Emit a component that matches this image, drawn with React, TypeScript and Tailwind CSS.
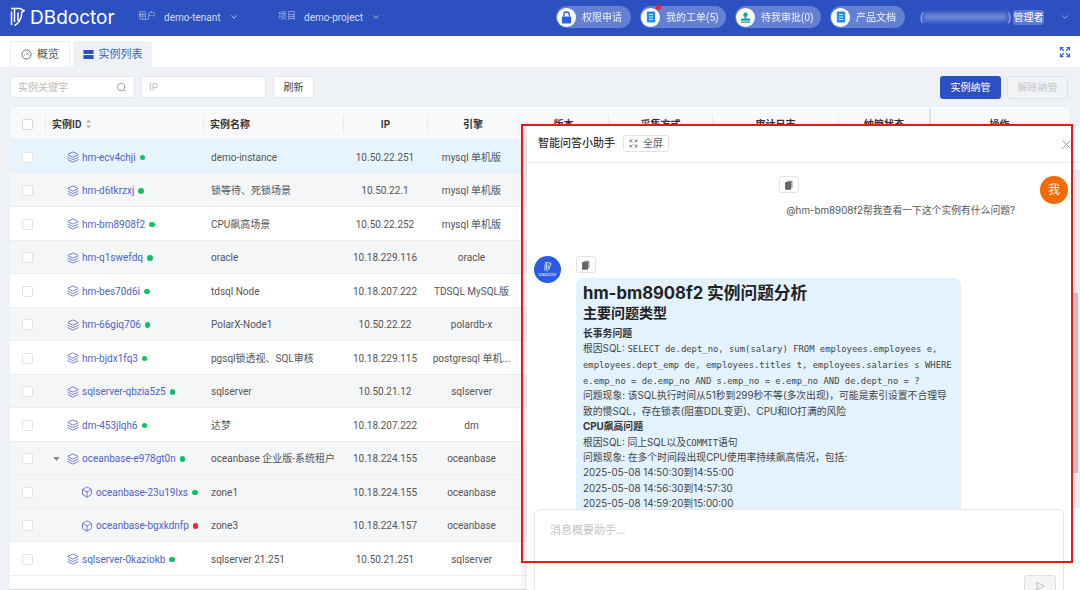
import React from "react";
import { ChevronDown, Search, Layers, Box, Expand, X } from "lucide-react";

type Row = {
  id: string;
  name: string;
  ip: string;
  engine: string;
  bg: string;
  level?: "parent" | "child";
  down?: boolean;
};

const WHITE = "bg-white";
const GRAY = "bg-[#f5f6f8]";

const rows: Row[] = [
  { id: "hm-ecv4chji", name: "demo-instance", ip: "10.50.22.251", engine: "mysql 单机版", bg: "bg-[#e8f4fd]" },
  { id: "hm-d6tkrzxj", name: "锁等待、死锁场景", ip: "10.50.22.1", engine: "mysql 单机版", bg: GRAY },
  { id: "hm-bm8908f2", name: "CPU飙高场景", ip: "10.50.22.252", engine: "mysql 单机版", bg: WHITE },
  { id: "hm-q1swefdq", name: "oracle", ip: "10.18.229.116", engine: "oracle", bg: GRAY },
  { id: "hm-bes70d6i", name: "tdsql Node", ip: "10.18.207.222", engine: "TDSQL MySQL版", bg: WHITE },
  { id: "hm-66giq706", name: "PolarX-Node1", ip: "10.50.22.22", engine: "polardb-x", bg: GRAY },
  { id: "hm-bjdx1fq3", name: "pgsql锁透视、SQL审核", ip: "10.18.229.115", engine: "postgresql 单机...", bg: WHITE },
  { id: "sqlserver-qbzia5z5", name: "sqlserver", ip: "10.50.21.12", engine: "sqlserver", bg: GRAY },
  { id: "dm-453jlqh6", name: "达梦", ip: "10.18.207.222", engine: "dm", bg: WHITE },
  { id: "oceanbase-e978gt0n", name: "oceanbase 企业版-系统租户", ip: "10.18.224.155", engine: "oceanbase", bg: GRAY, level: "parent" },
  { id: "oceanbase-23u19lxs", name: "zone1", ip: "10.18.224.155", engine: "oceanbase", bg: GRAY, level: "child" },
  { id: "oceanbase-bgxkdnfp", name: "zone3", ip: "10.18.224.157", engine: "oceanbase", bg: GRAY, level: "child", down: true },
  { id: "sqlserver-0kaziokb", name: "sqlserver 21.251", ip: "10.50.21.251", engine: "sqlserver", bg: WHITE },
];

function Logo({ className }: { className: string }) {
  return (
    <svg viewBox="0 0 15 20" fill="none" stroke="currentColor" strokeWidth="1.5" className={className}>
      <path d="M1 1.5h9l4.2 2.2-2.6 1.6c.4 5.500-2.600 10.500-7.100 13.200" />
      <path d="M4.500 1.500v13.500M8 5.500v8.500M1.500 4.500v13.500" />
    </svg>
  );
}

function CopyIcon() {
  return (
    <svg viewBox="0 0 12 12" className="w-[10px] h-[10px]" fill="none" stroke="#555" strokeWidth="1">
      <path d="M4 1.500h5.500v8" />
      <rect x="2" y="3" width="6" height="8" fill="#666" stroke="#555" />
    </svg>
  );
}

function CopyButton() {
  return (
    <div className="w-5 h-[17px] bg-white border border-[#e2e2e2] rounded-[3px] flex items-center justify-center">
      <CopyIcon />
    </div>
  );
}

function Pill({ label, icon, width, dot }: { label: string; icon: React.ReactNode; width: string; dot?: boolean }) {
  return (
    <div className={`relative h-[22px] rounded-full bg-[#6480d4] flex items-center gap-[6px] pl-[1px] text-[10px] text-white ${width}`}>
      <div className="w-[19px] h-[19px] rounded-full bg-white flex items-center justify-center">{icon}</div>
      <span className="opacity-90">{label}</span>
      {dot && <span className="absolute left-[16px] -top-[1px] w-[5px] h-[5px] rounded-full bg-[#f5222d]" />}
    </div>
  );
}

function DocIcon() {
  return (
    <svg viewBox="0 0 12 14" className="w-[10px] h-[12px]">
      <rect x="1" y="0.5" width="10" height="13" rx="1.500" fill="#1f8cf5" />
      <path d="M3.500 4h5M3.500 7h5M3.500 10h5" stroke="#fff" strokeWidth="1" />
    </svg>
  );
}

function TopBar() {
  return (
    <header className="h-[36px] pb-[2px] bg-[#2d50c0] flex items-center text-white font-['Roboto','Noto_Sans_CJK_SC',sans-serif]">
      <div className="flex items-center ml-[10px] w-[128px]">
        <Logo className="w-[15px] h-[20px] text-white" />
        <span className="ml-[5px] text-[19px] leading-none font-['Inter',sans-serif] font-normal">DBdoctor</span>
      </div>
      <div className="flex items-center w-[140px] text-[10px] text-[#d5dcf3]">
        <span className="opacity-70 text-[9px]">租户</span>
        <span className="ml-[8px]">demo-tenant</span>
        <ChevronDown className="w-[10px] h-[10px] ml-[8px]" />
      </div>
      <div className="flex items-center text-[10px] text-[#d5dcf3] w-[278px]">
        <span className="opacity-70 text-[9px]">项目</span>
        <span className="ml-[8px]">demo-project</span>
        <ChevronDown className="w-[10px] h-[10px] ml-[8px]" />
      </div>
      <div className="flex items-center gap-[9px]">
        <Pill
          width="w-[75px]"
          label="权限申请"
          icon={
            <svg viewBox="0 0 12 14" className="w-[11px] h-[13px]">
              <path d="M3 6V4a3 3 0 0 1 6 0v2" fill="none" stroke="#2a5cf0" strokeWidth="1.400" />
              <rect x="1" y="6" width="10" height="7.500" rx="1" fill="#2a5cf0" />
            </svg>
          }
        />
        <Pill width="w-[86px]" label="我的工单(5)" icon={<DocIcon />} dot />
        <Pill
          width="w-[86px]"
          label="待我审批(0)"
          icon={
            <svg viewBox="0 0 12 12" className="w-[11px] h-[11px]" fill="#13a89e">
              <circle cx="6" cy="3" r="2.400" />
              <path d="M5 5h2v2h4v2.500H1V7h4z" />
              <rect x="1" y="10.400" width="10" height="1.400" />
            </svg>
          }
        />
        <Pill width="w-[75px]" label="产品文档" icon={<DocIcon />} />
      </div>
      <div className="ml-[15px] flex items-center">
        <span className="text-[10px] text-[#c8d2f0]">(</span>
        <div className="w-[84px] h-[8px] bg-[#6d88d8] blur-[2px]" />
        <span className="text-[10px] text-[#c8d2f0]">)</span>
      </div>
      <span className="ml-[2px] h-[15px] w-[31px] rounded-[3px] bg-[#5c7bd0] text-[10px] leading-[15px] text-center">管理者</span>
      <ChevronDown className="w-[10px] h-[10px] ml-[16px] text-[#a9b8e6]" />
    </header>
  );
}

function Tabs() {
  return (
    <div className="h-[31px] bg-white flex items-end pl-[10px] gap-[3px] relative">
      <div className="h-[26px] w-[60px] border border-b-0 border-[#eaecf0] rounded-t-[3px] flex items-center justify-center gap-[5px] text-[11px] text-[#555]">
        <svg viewBox="0 0 12 12" className="w-[11px] h-[11px]" fill="none" stroke="#666" strokeWidth="1">
          <circle cx="6" cy="6" r="5" />
          <path d="M6 6l2-2M3 6.500h1M8 6.500h1" />
        </svg>
        概览
      </div>
      <div className="h-[26px] w-[79px] bg-[#eef1f5] rounded-t-[3px] flex items-center justify-center gap-[5px] text-[11px] text-[#3f5fc6]">
        <svg viewBox="0 0 12 12" className="w-[11px] h-[11px]" fill="#2d50c0">
          <rect x="0.500" y="1" width="11" height="4.500" rx="0.500" />
          <rect x="0.500" y="6.500" width="11" height="4.500" rx="0.500" />
        </svg>
        实例列表
      </div>
      <Expand className="absolute right-[9px] top-[10px] w-[12px] h-[12px] text-[#3f63d8]" strokeWidth={2.500} />
    </div>
  );
}

function Toolbar() {
  return (
    <div className="h-[40px] flex items-center pl-[10px] pr-[12px] text-[10px]">
      <div className="w-[125px] h-[22px] bg-white border border-[#e4e6ea] rounded-[3px] flex items-center justify-between px-[7px] text-[#bbb]">
        实例关键字
        <Search className="w-[11px] h-[11px] text-[#999]" />
      </div>
      <div className="ml-[6px] w-[125px] h-[22px] bg-white border border-[#e4e6ea] rounded-[3px] flex items-center px-[7px] text-[#bbb]">IP</div>
      <div className="ml-[7px] w-[41px] h-[22px] bg-white border border-[#e4e6ea] rounded-[3px] flex items-center justify-center text-[#444]">刷新</div>
      <div className="ml-auto w-[61px] h-[23px] bg-[#2d50c0] rounded-[3px] flex items-center justify-center text-white">实例纳管</div>
      <div className="ml-[6px] w-[61px] h-[23px] bg-[#f2f3f5] border border-[#e0e2e6] rounded-[3px] flex items-center justify-center text-[#c4c6ca]">解除纳管</div>
    </div>
  );
}

const cols = "grid grid-cols-[35px_158px_140px_84px_91px_90px_104px_126px_91px_139px]";

function InstanceTable() {
  return (
    <div className="mx-[10px] font-['Roboto','Noto_Sans_CJK_SC',sans-serif]">
      <div className={`${cols} h-[33px] pt-[2px] bg-[#f8f9fb] border-b border-[#eceef2] text-[10px] font-semibold text-[#333]`}>
        <div className="flex items-center justify-center">
          <span className="w-[11px] h-[11px] bg-white border border-[#d9d9d9] rounded-[2px]" />
        </div>
        <div className="flex items-center border-l border-[#e8eaee] my-[6px] pl-[6px] gap-[4px]">
          实例ID
          <svg viewBox="0 0 8 11" className="w-[7px] h-[10px]" fill="#bbb">
            <path d="M4 0l3 4H1zM4 11L1 7h6z" />
          </svg>
        </div>
        <div className="flex items-center border-l border-[#e8eaee] my-[6px] pl-[6px]">实例名称</div>
        <div className="flex items-center justify-center border-l border-[#e8eaee] my-[6px]">IP</div>
        <div className="flex items-center justify-center border-l border-[#e8eaee] my-[6px]">引擎</div>
        <div className="flex items-center justify-center border-l border-[#e8eaee] my-[6px]">版本</div>
        <div className="flex items-center justify-center border-l border-[#e8eaee] my-[6px]">采集方式</div>
        <div className="flex items-center justify-center border-l border-[#e8eaee] my-[6px]">审计日志</div>
        <div className="flex items-center justify-center border-l border-[#e8eaee] my-[6px]">纳管状态</div>
        <div className="flex items-center justify-center border-l-2 border-[#dfe1e6]">操作</div>
      </div>
      {rows.map((r) => (
        <div key={r.id} className={`${cols} h-[33.5px] pt-[2px] ${r.bg} border-b border-[#eceef2] text-[10px] text-[#555]`}>
          <div className="flex items-center justify-center">
            <span className="w-[11px] h-[11px] bg-white border border-[#e3e3e3] rounded-[2px]" />
          </div>
          <div className={`flex items-center whitespace-nowrap text-[#4f63c9] ${r.level === "child" ? "pl-[36px]" : "pl-[22px]"}`}>
            {r.level === "parent" && (
              <svg viewBox="0 0 8 5" className="w-[7px] h-[4px] -ml-[14px] mr-[7px]" fill="#888">
                <path d="M0 0h8L4 5z" />
              </svg>
            )}
            {r.level === "child" ? (
              <Box className="w-[12px] h-[12px] mr-[3px] shrink-0" strokeWidth={1.600} />
            ) : (
              <Layers className="w-[12px] h-[12px] mr-[3px] shrink-0" strokeWidth={1.600} />
            )}
            {r.id}
            <span className={`ml-[4px] w-[5.500px] h-[5.500px] rounded-full shrink-0 ${r.down ? "bg-[#f5222d]" : "bg-[#0fbf6a]"}`} />
          </div>
          <div className="flex items-center pl-[8px] whitespace-nowrap">{r.name}</div>
          <div className="flex items-center justify-center">{r.ip}</div>
          <div className="flex items-center justify-center pr-[2px] whitespace-nowrap">{r.engine}</div>
        </div>
      ))}
      <div className="h-[13px] bg-white" />
      <div className="h-[2px] bg-[#d6d8dc]" />
    </div>
  );
}

function AssistantDrawer() {
  return (
    <aside className="absolute left-[527px] top-[125px] right-0 bottom-0 bg-white flex flex-col overflow-hidden shadow-[-4px_0_6px_rgba(0,0,0,0.08)]">
      <div className="h-[38px] shrink-0 border-b border-[#eeeeee] flex items-center pl-[11px] relative">
        <span className="text-[11px] text-[#333] font-medium">智能问答小助手</span>
        <div className="ml-[8px] w-[46px] h-[17px] border border-[#e2e2e2] rounded-[3px] flex items-center justify-center gap-[5px] text-[10px] text-[#666]">
          <Expand className="w-[9px] h-[9px]" />
          全屏
        </div>
        <X className="absolute right-[6px] top-[12px] w-[15px] h-[15px] text-[#999]" strokeWidth={1.500} />
      </div>

      <div className="flex-1 min-h-0 overflow-hidden pr-[12px] pl-[7px]">
        <div className="relative h-[93px]">
          <div className="absolute left-[245px] top-[13px]">
            <CopyButton />
          </div>
          <div className="absolute right-0 top-[13px] w-[28px] h-[28px] rounded-full bg-[#f26a00] text-white text-[12px] flex items-center justify-center">我</div>
          <div className="absolute right-[53px] top-[40px] text-[9.800px] leading-[15px] text-[#555] whitespace-nowrap">@hm-bm8908f2帮我查看一下这个实例有什么问题?</div>
        </div>

        <div className="flex gap-[15px]">
          <div className="w-[27px] h-[27px] shrink-0 rounded-full bg-[#2b5be0] flex flex-col items-center justify-center text-white">
            <Logo className="w-[8px] h-[10px]" />
            <span className="text-[4px] leading-[5px]">DBdoctor</span>
          </div>
          <div className="w-[385px]">
            <CopyButton />
            <div className="mt-[5px] bg-[#e3f2fd] rounded-t-[8px] px-[7px] pt-[5px] pb-[12px] text-[9.800px] leading-[15.400px] text-[#444]">
              <h1 className="text-[16.700px] leading-[20px] font-bold text-[#222]">hm-bm8908f2 实例问题分析</h1>
              <h2 className="text-[14px] leading-[20px] font-bold text-[#222] mb-[3px]">主要问题类型</h2>
              <p className="font-bold text-[#333]">长事务问题</p>
              <div className="leading-[16px] -mb-[1px]">
                根因SQL:{" "}
                <code className="font-['DejaVu_Sans_Mono',monospace] text-[8.900px]">
                  SELECT de.dept_no, sum(salary) FROM employees.employees e, employees.dept_emp de, employees.titles t, employees.salaries s WHERE e.emp_no = de.emp_no AND s.emp_no = e.emp_no AND de.dept_no = ?
                </code>
              </div>
              <p>问题现象: 该SQL执行时间从51秒到299秒不等(多次出现)，可能是索引设置不合理导致的慢SQL，存在锁表(阻塞DDL变更)、CPU和IO打满的风险</p>
              <p className="font-bold text-[#333]">CPU飙高问题</p>
              <p>
                根因SQL: 同上SQL以及<code className="font-['DejaVu_Sans_Mono',monospace] text-[8.900px] leading-none">COMMIT</code>语句
              </p>
              <p>问题现象: 在多个时间段出现CPU使用率持续飙高情况，包括:</p>
              <p>2025-05-08 14:50:30到14:55:00</p>
              <p>2025-05-08 14:56:30到14:57:30</p>
              <p>2025-05-08 14:59:20到15:00:00</p>
            </div>
          </div>
        </div>
      </div>

      <div className="h-[81px] shrink-0 ml-[7px] mr-[16px] bg-white border border-b-0 border-[#e6e6e6] rounded-t-[6px] relative text-[11px] text-[#c4c4c4] pl-[15px] pt-[12px]">
        消息概要助手...
        <div className="absolute right-[7px] top-[65px] w-[32px] h-[22px] bg-[#f5f5f5] border border-[#e0e0e0] rounded-[3px] flex items-start justify-center pt-[5px]">
          <svg viewBox="0 0 12 12" className="w-[10px] h-[10px]" fill="none" stroke="#bbb" strokeWidth="1">
            <path d="M1 1l10 5-10 5 2-5z" />
          </svg>
        </div>
      </div>

      <div className="absolute right-0 top-[45px] bottom-[82px] w-[7px] bg-[#ededed]">
        <div className="absolute left-0 w-[5px] top-[123px] h-[180px] bg-[#c1c1c1]" />
      </div>
    </aside>
  );
}

export default function App() {
  return (
    <div className="relative w-[1080px] h-[590px] overflow-hidden bg-[#eef1f5] font-['Inter','Noto_Sans_CJK_SC',sans-serif]">
      <TopBar />
      <Tabs />
      <Toolbar />
      <InstanceTable />
      <AssistantDrawer />
      <div className="absolute left-[521px] top-[124px] w-[552px] h-[439px] border-2 border-[#f01414] pointer-events-none" />
    </div>
  );
}
